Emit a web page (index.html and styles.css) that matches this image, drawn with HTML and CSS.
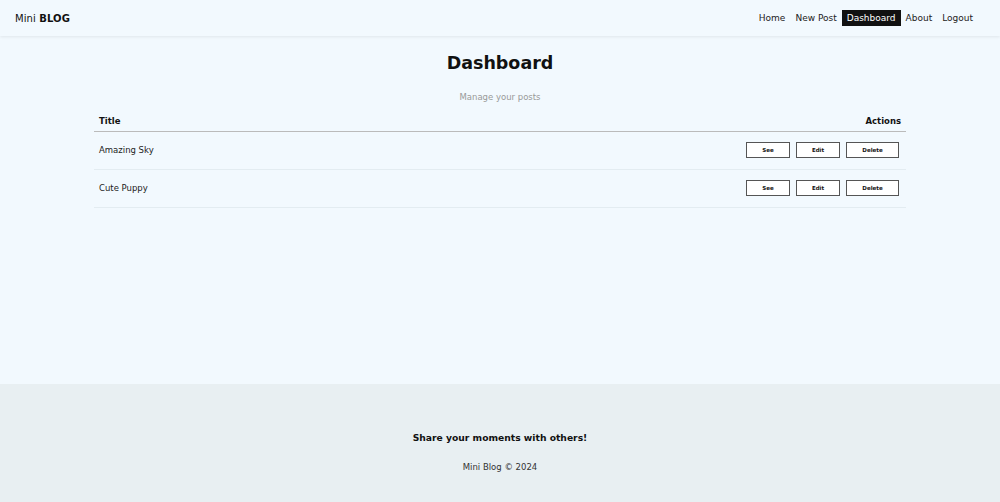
FILE: index.html
```html
<!DOCTYPE html>
<html>
<head>
<meta charset="utf-8">
<link rel="stylesheet" href="styles.css">
</head>
<body>
<header class="topbar">
  <div class="brand">Mini <b>BLOG</b></div>
  <nav class="nav">
    <a href="#">Home</a>
    <a href="#">New Post</a>
    <a href="#" class="active">Dashboard</a>
    <a href="#">About</a>
    <a href="#">Logout</a>
  </nav>
</header>
<main class="main">
  <h1 class="title">Dashboard</h1>
  <p class="subtitle">Manage your posts</p>
  <table class="posts">
    <thead>
      <tr><th class="col-title">Title</th><th class="col-actions">Actions</th></tr>
    </thead>
    <tbody>
      <tr>
        <td>Amazing Sky</td>
        <td class="actions"><button>See</button><button>Edit</button><button class="del">Delete</button></td>
      </tr>
      <tr>
        <td>Cute Puppy</td>
        <td class="actions"><button>See</button><button>Edit</button><button class="del">Delete</button></td>
      </tr>
    </tbody>
  </table>
</main>
<footer class="footer">
  <p class="tagline">Share your moments with others!</p>
  <p class="copy">Mini Blog © 2024</p>
</footer>
</body>
</html>
```
FILE: styles.css
```css
* { box-sizing: border-box; }
html, body { margin: 0; padding: 0; }
body {
  font-family: "DejaVu Sans", "Open Sans", sans-serif;
  background: #f2f9fe;
  color: #111;
}
.topbar {
  height: 36px;
  display: flex;
  align-items: center;
  justify-content: space-between;
  padding: 0 15px;
  background: #f2f9fe;
  box-shadow: 0 1px 3px rgba(0,0,0,0.08);
  position: relative;
}
.brand { font-size: 10px; color: #111; letter-spacing: 0.1px; }
.brand b { font-weight: 700; }
.nav { display: flex; align-items: center; gap: 0; margin-right: 7px; }
.nav a {
  font-size: 9px;
  color: #222;
  text-decoration: none;
  padding: 2px 5px;
  line-height: 12px;
}
.nav a.active { background: #111; color: #fff; }
.main {
  min-height: 348px;
  display: flex;
  flex-direction: column;
  align-items: center;
}
.title {
  margin: 14px 0 0;
  font-size: 17.5px;
  font-weight: 700;
  line-height: 26px;
}
.subtitle {
  margin: 15px 0 0;
  font-size: 8.5px;
  color: #999;
  line-height: 12px;
}
.posts {
  width: 812px;
  margin-top: 9px;
  border-collapse: collapse;
}
.posts th {
  font-size: 8.5px;
  font-weight: 700;
  padding: 2px 5px 3px;
  height: 19px;
  border-bottom: 1px solid #bbb;
}
.col-title { text-align: left; }
.col-actions { text-align: right; }
.posts td {
  font-size: 8.5px;
  color: #222;
  height: 38px;
  padding: 0 5px;
  border-bottom: 1px solid #e3ecf1;
}
.actions { text-align: right; white-space: nowrap; }
.actions button {
  font-family: inherit;
  font-size: 5.5px;
  font-weight: 700;
  width: 44px;
  height: 16px;
  background: #fff;
  border: 1px solid #555;
  margin-left: 6px;
  padding: 0;
  color: #111;
  cursor: pointer;
}
.actions button.del { width: 53px; margin-right: 2px; }
.footer {
  background: #e8eff2;
  height: 118px;
  text-align: center;
  padding-top: 47px;
}
.tagline { margin: 0; font-size: 9.2px; font-weight: 700; line-height: 14px; }
.copy { margin: 16px 0 0; font-size: 8.5px; color: #333; line-height: 12px; }
```
